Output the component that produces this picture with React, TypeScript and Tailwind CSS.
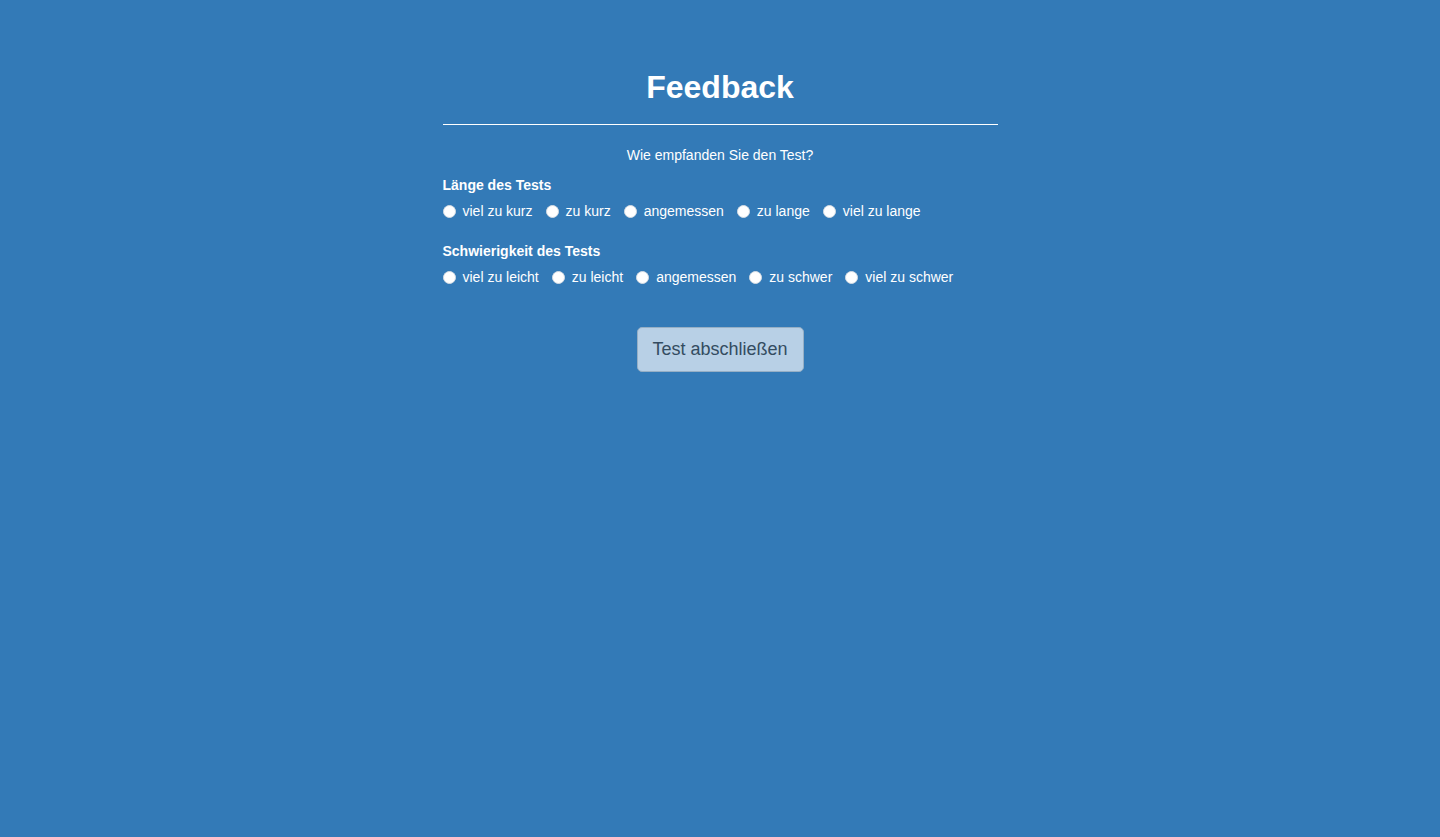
const laenge = ["viel zu kurz", "zu kurz", "angemessen", "zu lange", "viel zu lange"];
const schwierigkeit = ["viel zu leicht", "zu leicht", "angemessen", "zu schwer", "viel zu schwer"];

function RadioRow({ name, options }: { name: string; options: string[] }) {
  return (
    <div className="mt-[6px] flex h-5 items-center gap-[13px]">
      {options.map((opt) => (
        <label key={opt} className="flex items-center gap-[7px] text-[14px] leading-5">
          <input
            type="radio"
            name={name}
            className="h-[13px] w-[13px] appearance-none rounded-full border border-[#d6dde4] bg-white"
          />
          <span>{opt}</span>
        </label>
      ))}
    </div>
  );
}

export default function App() {
  return (
    <div className="min-h-[837px] bg-[#337ab7] text-white [font-family:'Liberation_Sans',Arial,sans-serif]">
      <div className="mx-auto w-[555px] pt-[69px]">
        <h1 className="text-center text-[32px] font-bold leading-[36px]">Feedback</h1>
        <hr className="mt-[19px] border-t border-white" />
        <p className="mt-[20px] text-center text-[14px] leading-5">Wie empfanden Sie den Test?</p>

        <div className="mt-[10px] text-[14px] font-bold leading-5">Länge des Tests</div>
        <RadioRow name="laenge" options={laenge} />

        <div className="mt-[20px] text-[14px] font-bold leading-5">Schwierigkeit des Tests</div>
        <RadioRow name="schwierigkeit" options={schwierigkeit} />

        <div className="mt-[40px] flex justify-center">
          <button
            type="button"
            className="h-[45px] w-[167px] rounded-[5px] border border-[#96afc5] bg-[#b8d0e6] text-[18px] text-[#334c61]"
          >
            Test abschließen
          </button>
        </div>
      </div>
    </div>
  );
}
